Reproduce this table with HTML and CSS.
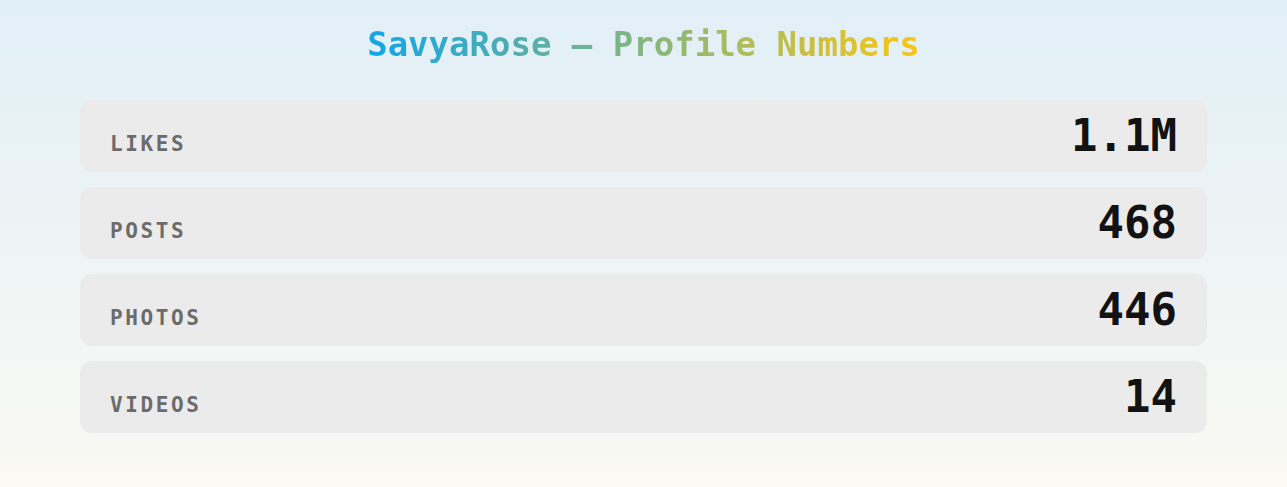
FILE: index.html
```html
<!DOCTYPE html>
<html lang="en">
<head>
    <meta charset="UTF-8">
    <meta name="viewport" content="width=device-width, initial-scale=1.0">
    <title>SavyaRose — Profile Numbers</title>
    <link rel="stylesheet" href="styles.css">
</head>
<body>
    <div class="page">
        <h1 class="title">SavyaRose — Profile Numbers</h1>

        <div class="stats">
            <div class="stat">
                <span class="stat-label">Likes</span>
                <span class="stat-value">1.1M</span>
            </div>
            <div class="stat">
                <span class="stat-label">Posts</span>
                <span class="stat-value">468</span>
            </div>
            <div class="stat">
                <span class="stat-label">Photos</span>
                <span class="stat-value">446</span>
            </div>
            <div class="stat">
                <span class="stat-label">Videos</span>
                <span class="stat-value">14</span>
            </div>
        </div>
    </div>
</body>
</html>
```

FILE: styles.css
```css
html, body {
    margin: 0;
    padding: 0;
    height: 100%;
}
body {
    font-family: "DejaVu Sans Mono", "Liberation Mono", monospace;
    background: linear-gradient(180deg, #e1eff7 0%, #faf9f3 100%);
}
.page {
    padding: 24px 80px;
}
.title {
    display: table;
    margin: 0 auto 35px;
    font-size: 34px;
    line-height: 1.2;
    font-weight: bold;
    text-align: center;
    background: linear-gradient(90deg, #12a5e8, #f8c617);
    -webkit-background-clip: text;
    background-clip: text;
    color: transparent;
}
.stats {
    display: flex;
    flex-direction: column;
    gap: 15px;
}
.stat {
    display: flex;
    justify-content: space-between;
    align-items: baseline;
    padding: 14px 30px;
    background-color: #ebebeb;
    border-radius: 12px;
}
.stat-label {
    font-size: 21px;
    font-weight: bold;
    letter-spacing: 2.6px;
    text-transform: uppercase;
    color: #6b6b6b;
}
.stat-value {
    font-size: 44px;
    line-height: 1;
    font-weight: bold;
    color: #121212;
}
```
